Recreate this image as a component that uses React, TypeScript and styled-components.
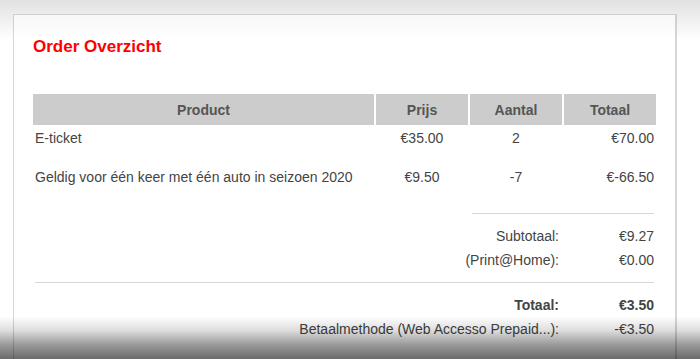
import styled, { createGlobalStyle } from "styled-components";

const GlobalStyle = createGlobalStyle`
    html, body {
        margin: 0;
        padding: 0;
        background: #ffffff;
        font-family: "Liberation Sans", Arial, sans-serif;
        overflow: hidden;
    }
`;

const Page = styled.div`
    height: 359px;
    padding: 14px 0 0 13px;
    box-sizing: border-box;
    overflow: hidden;
    background: linear-gradient(to bottom, #eeeeee 0px, #ffffff 40px);
`;

const Card = styled.div`
    width: 664px;
    min-height: 400px;
    box-sizing: border-box;
    background: #ffffff;
    border: 1px solid #d6d6d6;
    border-right-width: 2px;
    border-bottom: none;
    padding: 22px 19px 0 19px;
`;

const Title = styled.h1`
    margin: 0 0 37px 0;
    font-size: 17px;
    line-height: 20px;
    font-weight: 700;
    color: #ff0000;
`;

const Row = styled.div`
    display: grid;
    grid-template-columns: 341px 92px 92px 92px;
    column-gap: 2px;
`;

const HeadCell = styled.div`
    background: #cccccc;
    height: 31px;
    display: flex;
    align-items: center;
    justify-content: center;
    font-size: 14px;
    font-weight: 700;
    color: #555555;
`;

const Cell = styled.div<{ $align?: "left" | "center" | "right" }>`
    padding: 4px 2px 17px 2px;
    line-height: 18px;
    font-size: 14px;
    color: #444444;
    text-align: ${(p) => p.$align ?? "left"};
`;

const Summary = styled.div`
    margin-top: 10px;
    padding-right: 2px;
`;

const Divider = styled.div<{ $inset: number }>`
    height: 1px;
    background: #d6d6d6;
    margin-left: ${(p) => p.$inset}px;
`;

const Totals = styled.div`
    display: grid;
    grid-template-columns: 1fr 95px;
    margin: 10px 0;
`;

const TotalLabel = styled.div<{ $bold?: boolean }>`
    line-height: 24px;
    font-size: 14px;
    text-align: right;
    color: #444444;
    font-weight: ${(p) => (p.$bold ? 700 : 400)};
`;

const TotalValue = styled(TotalLabel)``;

const TopShade = styled.div`
    position: fixed;
    left: 0;
    right: 0;
    top: 0;
    height: 40px;
    pointer-events: none;
    background: linear-gradient(to bottom, rgba(0, 0, 0, 0.05), rgba(0, 0, 0, 0));
`;

const BottomShade = styled.div`
    position: fixed;
    left: 0;
    right: 0;
    bottom: 0;
    height: 43px;
    pointer-events: none;
    background: linear-gradient(
        to bottom,
        rgba(0, 0, 0, 0) 0%,
        rgba(0, 0, 0, 0.13) 33%,
        rgba(0, 0, 0, 0.4) 67%,
        rgba(0, 0, 0, 0.58) 100%
    );
`;

const items = [
    { name: "E-ticket", price: "€35.00", qty: "2", total: "€70.00" },
    { name: "Geldig voor één keer met één auto in seizoen 2020", price: "€9.50", qty: "-7", total: "€-66.50" },
];

export default function App() {
    return (
        <>
            <GlobalStyle />
            <Page>
                <Card>
                    <Title>Order Overzicht</Title>

                    <Row>
                        <HeadCell>Product</HeadCell>
                        <HeadCell>Prijs</HeadCell>
                        <HeadCell>Aantal</HeadCell>
                        <HeadCell>Totaal</HeadCell>
                    </Row>
                    {items.map((item) => (
                        <Row key={item.name}>
                            <Cell>{item.name}</Cell>
                            <Cell $align="center">{item.price}</Cell>
                            <Cell $align="center">{item.qty}</Cell>
                            <Cell $align="right">{item.total}</Cell>
                        </Row>
                    ))}

                    <Summary>
                        <Divider $inset={439} />
                        <Totals>
                            <TotalLabel>Subtotaal:</TotalLabel>
                            <TotalValue>€9.27</TotalValue>
                            <TotalLabel>(Print@Home):</TotalLabel>
                            <TotalValue>€0.00</TotalValue>
                        </Totals>
                        <Divider $inset={2} />
                        <Totals>
                            <TotalLabel $bold>Totaal:</TotalLabel>
                            <TotalValue $bold>€3.50</TotalValue>
                            <TotalLabel>Betaalmethode (Web Accesso Prepaid...):</TotalLabel>
                            <TotalValue>-€3.50</TotalValue>
                        </Totals>
                    </Summary>
                </Card>
            </Page>
            <TopShade />
            <BottomShade />
        </>
    );
}
